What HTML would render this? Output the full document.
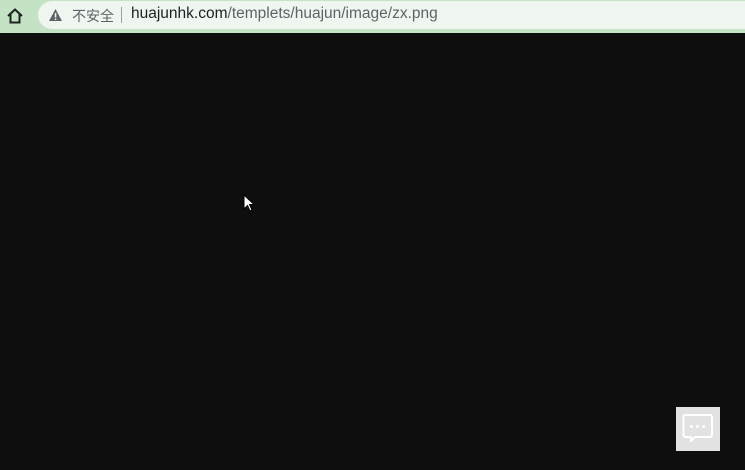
<!DOCTYPE html>
<html><head><meta charset="utf-8"><style>
*{margin:0;padding:0;box-sizing:border-box}
body{width:745px;height:470px;overflow:hidden;background:#0e0e0e;font-family:"Liberation Sans","Noto Sans CJK SC",sans-serif;position:relative}
#bar{position:absolute;left:0;top:0;width:745px;height:33px;background:#c4e2c4}
#omni{position:absolute;left:38px;top:1px;width:720px;height:28px;background:#eff6ef;border-radius:14px 0 0 14px}
#txt{position:absolute;left:72px;top:6px;font-size:14px;color:#5f6368;white-space:nowrap}
#url{position:absolute;left:131px;top:5px;font-size:15.5px;color:#5f6368;white-space:nowrap}
#url b{font-weight:normal;color:#202124}
#sep{position:absolute;left:121px;top:7px;width:1px;height:16px;background:#9aa0a6}
#chat{position:absolute;left:676px;top:407px;width:44px;height:44px;background:#e2e2e2}
</style></head><body>
<div id="bar">
<svg style="position:absolute;left:6px;top:7px" width="18" height="18" viewBox="0 0 18 18"><path d="M2 9 L9 2.5 L16 9 M4.5 7 V15.5 H13.5 V7" fill="none" stroke="#202124" stroke-width="2" stroke-linejoin="miter"/></svg>
<div id="omni"></div>
<svg style="position:absolute;left:48px;top:8px" width="15" height="14" viewBox="0 0 15 14"><path d="M7.5 1 L14 13 H1 Z" fill="#5f6368"/><rect x="6.8" y="5" width="1.5" height="4.5" fill="#eff6ef"/><rect x="6.8" y="10.5" width="1.5" height="1.5" fill="#eff6ef"/></svg>
<div id="txt">不安全</div><div id="sep"></div>
<div id="url"><b>huajunhk.com</b>/templets/huajun/image/zx.png</div>
</div>
<svg style="position:absolute;left:243px;top:194px" width="12" height="18" viewBox="0 0 12 18"><path d="M1 1 V15 L4.5 11.5 L7 17 L9 16 L6.5 10.5 H11 Z" fill="#fff" stroke="#000" stroke-width="1"/></svg>
<div id="chat"><svg width="44" height="44" viewBox="0 0 44 44"><path d="M9.5 8 H34 a2 2 0 0 1 2 2 V28 a2 2 0 0 1 -2 2 H19 L15 34 V30 H9.5 a2 2 0 0 1 -2 -2 V10 a2 2 0 0 1 2 -2 Z" fill="none" stroke="#fff" stroke-width="2" stroke-linejoin="round"/><circle cx="15.5" cy="19.5" r="1.5" fill="#fff"/><circle cx="21.5" cy="19.5" r="1.5" fill="#fff"/><circle cx="27.5" cy="19.5" r="1.5" fill="#fff"/></svg></div>
</body></html>
